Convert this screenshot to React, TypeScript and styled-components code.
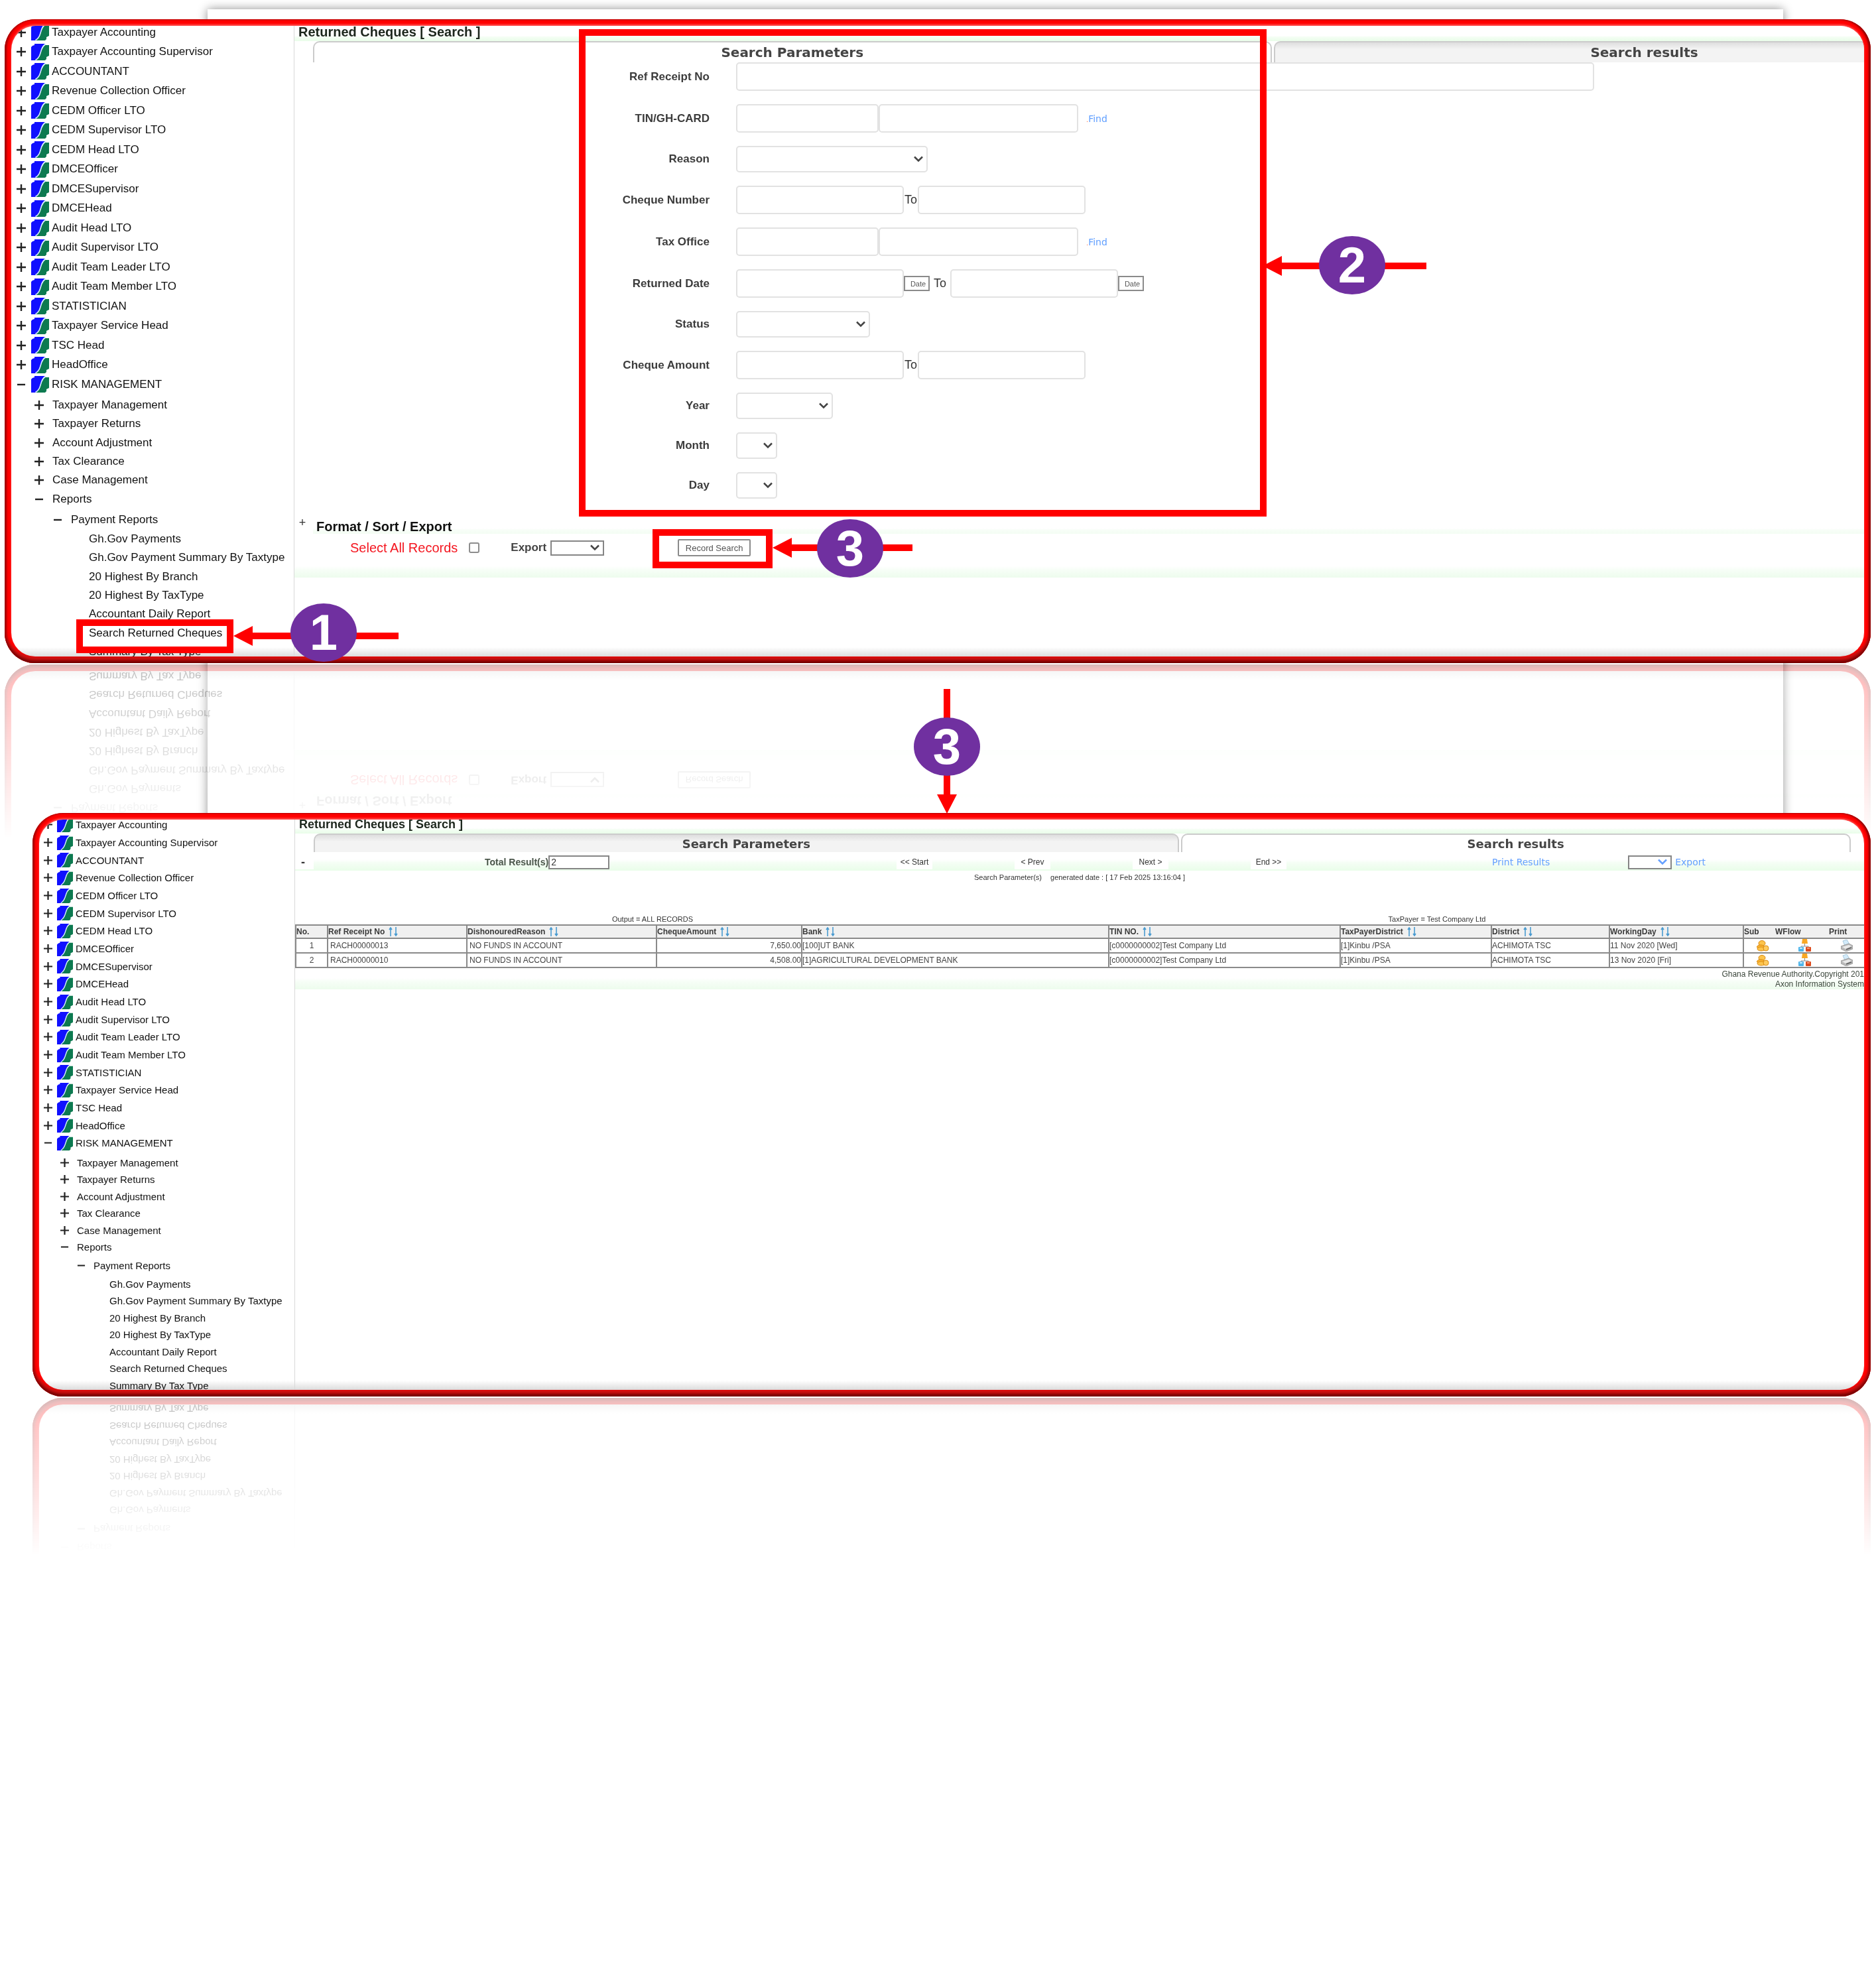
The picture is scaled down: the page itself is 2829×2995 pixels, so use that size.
import React from "react";
import styled, { createGlobalStyle, css } from "styled-components";

type Size = "large" | "medium";

const sans = `"Liberation Sans", Arial, Helvetica, sans-serif`;
const wide = `"DejaVu Sans", Verdana, sans-serif`;

const GlobalStyle = createGlobalStyle`
  *, *::before, *::after { box-sizing: border-box; }
  body { margin: 0; background: #fff; color: #222; font-family: ${sans}; }
  button, input, select { font-family: inherit; margin: 0; }
  ul { list-style: none; margin: 0; padding: 0; }
`;

/* ---------- page ---------- */

const Page = styled.div`
  position: relative;
  isolation: isolate;
  overflow: hidden;
  padding: 29px 8px 888px 7px;
  display: flex;
  flex-direction: column;
  gap: 226px;
`;

const Slide = styled.div`
  position: absolute;
  z-index: -1;
  left: 313px;
  right: 140px;
  top: 14px;
  height: 1600px;
  background: #fff;
  box-shadow: 0 0 14px rgba(0, 0, 0, 0.45);
`;

const Stage = styled.section<{ $indent?: boolean }>`
  position: relative;
  margin-left: ${(p) => (p.$indent ? 42 : 0)}px;
`;

const Frame = styled.div`
  padding: 10px;
  border-radius: 46px;
  background: #f00;
  box-shadow:
    inset 0 -4px 4px #700000,
    inset 0 -10px 3px #d01010,
    inset 3px 0 3px #b00000,
    inset -3px 0 3px #8c0000;
  -webkit-box-reflect: below 2px
    linear-gradient(to top, rgba(0, 0, 0, 0.28), transparent 27%);
`;

const Screen = styled.div`
  display: flex;
  overflow: hidden;
  border-radius: 36px;
  background: linear-gradient(to top, #dcdcdc, #fff 14px);
  box-shadow: 0 -2px 3px #ff5a5a;
`;

/* ---------- navigation tree ---------- */

const Nav = styled.nav<{ $size: Size }>`
  flex: none;
  width: ${(p) => (p.$size === "large" ? 427 : 386)}px;
  margin: ${(p) => (p.$size === "large" ? "-5px 0 -7px" : "-6px 0 -6px")};
  padding-left: ${(p) => (p.$size === "large" ? 5 : 4)}px;
  border-right: 1px solid #d9d9d9;
  font-size: ${(p) => (p.$size === "large" ? 17 : 15)}px;
  color: #111;
`;

const largeRoots = css`
  height: 29px;
  &:nth-child(even) { height: 30px; }
`;
const mediumRoots = css`
  height: 27px;
  &:nth-child(3n) { height: 26px; }
`;
const largeItems = css`
  height: 28px;
  &:nth-child(3n) { height: 29px; }
`;
const mediumItems = css`
  height: 26px;
  &:nth-child(even) { height: 25px; }
`;

const Row = styled.li<{ $size: Size; $root?: boolean }>`
  display: flex;
  align-items: center;
  white-space: nowrap;
  ${(p) =>
    p.$root
      ? p.$size === "large" ? largeRoots : mediumRoots
      : p.$size === "large" ? largeItems : mediumItems}
`;

const Branch = styled.ul<{ $pad: number; $top: number }>`
  padding-left: ${(p) => p.$pad}px;
  padding-top: ${(p) => p.$top}px;
`;

const Toggle = styled.button<{ $size: Size; $root?: boolean }>`
  display: flex;
  align-items: center;
  flex: none;
  width: ${(p) => (p.$size === "large" ? 25 : 23) + (p.$root ? 0 : 5)}px;
  padding: 0 0 0 3px;
  border: 0;
  background: none;
  color: #222;
`;

const RoleIcon = styled.svg<{ $size: Size }>`
  flex: none;
  width: ${(p) => (p.$size === "large" ? 27 : 24)}px;
  height: ${(p) => (p.$size === "large" ? 25 : 22)}px;
  margin-right: 4px;
`;

const NavLink = styled.a`
  color: inherit;
  text-decoration: none;
`;

const roles = [
  "Taxpayer Accounting", "Taxpayer Accounting Supervisor", "ACCOUNTANT",
  "Revenue Collection Officer", "CEDM Officer LTO", "CEDM Supervisor LTO",
  "CEDM Head LTO", "DMCEOfficer", "DMCESupervisor", "DMCEHead", "Audit Head LTO",
  "Audit Supervisor LTO", "Audit Team Leader LTO", "Audit Team Member LTO",
  "STATISTICIAN", "Taxpayer Service Head", "TSC Head", "HeadOffice", "RISK MANAGEMENT",
];
const sections = [
  "Taxpayer Management", "Taxpayer Returns", "Account Adjustment",
  "Tax Clearance", "Case Management", "Reports",
];
const reports = [
  "Gh.Gov Payments", "Gh.Gov Payment Summary By Taxtype", "20 Highest By Branch",
  "20 Highest By TaxType", "Accountant Daily Report", "Search Returned Cheques",
  "Summary By Tax Type",
];

const Expander = ({ open, size, name, root }: { open: boolean; size: Size; name: string; root?: boolean }) => {
  const d = size === "large" ? 14 : 13;
  return (
    <Toggle type="button" $size={size} $root={root} aria-label={name} aria-expanded={open}>
      <svg width={d} height={d} viewBox="0 0 14 14" stroke="currentColor" strokeWidth="2.4">
        <path d={open ? "M1 7h12" : "M0 7h14M7 0v14"} />
      </svg>
    </Toggle>
  );
};

const Tree = ({ size }: { size: Size }) => {
  const large = size === "large";
  return (
    <Nav $size={size} aria-label="Menu">
      <ul>
        {roles.map((r) => (
          <Row key={r} $size={size} $root>
            <Expander open={r === "RISK MANAGEMENT"} size={size} name={r} root />
            <RoleIcon $size={size} viewBox="0 0 27 25" preserveAspectRatio="none" aria-hidden="true">
              <path d="M0 5 2 3l3-1V0h16C12 6 17 19 8 25H0z" fill="#1010ff" />
              <path d="M27 2v16l-4 2v3l-2 2H7c10-5 5-18 14-23z" fill="#0d7a50" />
              <path d="M22 .5C12 6 17 19 6.500 24.500" fill="none" stroke="#d5ecff" strokeWidth="1.600" />
            </RoleIcon>
            <NavLink href="#">{r}</NavLink>
          </Row>
        ))}
      </ul>
      <Branch $pad={large ? 27 : 25} $top={3}>
        {sections.map((s) => (
          <Row key={s} $size={size}>
            <Expander open={s === "Reports"} size={size} name={s} />
            <NavLink href="#">{s}</NavLink>
          </Row>
        ))}
      </Branch>
      <Branch $pad={large ? 55 : 50} $top={large ? 3 : 2}>
        <Row $size={size}>
          <Expander open size={size} name="Payment Reports" />
          <NavLink href="#">Payment Reports</NavLink>
        </Row>
      </Branch>
      <Branch $pad={large ? 112 : 102} $top={large ? 1 : 2}>
        {reports.map((r) => (
          <Row key={r} $size={size}><NavLink href="#">{r}</NavLink></Row>
        ))}
      </Branch>
    </Nav>
  );
};

/* ---------- shared parts of the work area ---------- */

const Work = styled.main`
  flex: 1;
  min-width: 0;
  overflow: hidden;
`;

const Title = styled.h1<{ $size: Size }>`
  margin: 0;
  padding-left: 6px;
  height: ${(p) => (p.$size === "large" ? 23 : 21)}px;
  font-size: ${(p) => (p.$size === "large" ? 20 : 18)}px;
  line-height: ${(p) => (p.$size === "large" ? 18 : 15)}px;
  color: #1c261c;
  background: linear-gradient(to top, #e9fde9, #f4fef4 6px, #fff 8px);
`;

const Tabs = styled.div`
  display: flex;
  gap: 3px;
  padding-left: 28px;
`;

const Tab = styled.button<{ $size: Size; $share: string; $active?: boolean }>`
  flex: none;
  width: ${(p) => p.$share};
  height: ${(p) => (p.$size === "large" ? 32 : 28)}px;
  padding: 0;
  border: 2px solid #cbcbcb;
  border-bottom: 0;
  border-radius: 10px 10px 0 0;
  background: ${(p) => (p.$active ? "#fff" : "linear-gradient(#dedede, #f3f3f3 10px)")};
  color: #444;
  font: bold ${(p) => (p.$size === "large" ? 20 : 18)}px ${wide};
`;

const TextBox = styled.input<{ $w: number }>`
  width: ${(p) => p.$w}px;
  height: 43px;
  border: 2px solid #e2e2e2;
  border-radius: 5px;
  background: #fff;
  font-size: 17px;
`;

const Picker = styled.span<{ $w: number; $h: number; $plain?: boolean; $tint: string }>`
  display: inline-grid;
  align-items: center;
  width: ${(p) => p.$w}px;
  height: ${(p) => p.$h}px;
  color: ${(p) => p.$tint};
  & > * { grid-area: 1 / 1; }
  & > select {
    appearance: none;
    width: 100%;
    height: 100%;
    background: #fff;
    color: inherit;
    border: ${(p) => (p.$plain ? "2px solid #858585" : "2px solid #e2e2e2")};
    border-radius: ${(p) => (p.$plain ? 0 : 5)}px;
  }
  & > svg {
    justify-self: end;
    margin-right: 7px;
    pointer-events: none;
  }
`;

const Choice = ({ id, w, h = 40, plain, label, tint = "#444" }: { id: string; w: number; h?: number; plain?: boolean; label?: string; tint?: string }) => (
  <Picker $w={w} $h={h} $plain={plain} $tint={tint}>
    <select id={id} aria-label={label}><option /></select>
    <svg width="14" height="10" viewBox="0 0 14 10" fill="none" stroke="currentColor" strokeWidth="2.5">
      <path d="M1 1.500l6 6 6-6" />
    </svg>
  </Picker>
);

/* ---------- search form ---------- */

const Form = styled.form`
  display: grid;
  grid-template-columns: 626px 1fr;
  column-gap: 40px;
  row-gap: 20px;
  align-items: center;
`;

const FieldLabel = styled.label`
  text-align: right;
  font-size: 17px;
  font-weight: bold;
  color: #3c3c3c;
`;

const Field = styled.div`
  display: flex;
  align-items: center;
`;

const To = styled.span<{ $gap?: number }>`
  width: 21px;
  margin: 0 ${(p) => p.$gap ?? 0}px;
  font-size: 18px;
  text-align: center;
  color: #333;
`;

const Find = styled.a`
  margin-left: 12px;
  font: 14px ${wide};
  color: #62a0ff;
  text-decoration: none;
  &::before { content: "."; color: #ff7a5a; font-size: 10px; }
`;

const DateButton = styled.button`
  width: 39px;
  height: 23px;
  padding: 0 0 0 4px;
  border: 2px solid #8b8b8b;
  background: #fff;
  font-size: 11px;
  color: #555;
`;

const FormatBar = styled.div`
  display: flex;
  margin-top: 28px;
  height: 25px;
`;

const FormatToggle = styled.button`
  width: 28px;
  height: 16px;
  padding: 0 4px 0 0;
  border: 0;
  background: none;
  font-size: 18px;
  line-height: 16px;
  color: #333;
`;

const FormatTitle = styled.h2`
  flex: 1;
  margin: 0;
  padding-left: 5px;
  font-size: 20px;
  line-height: 28px;
  color: #111;
  background: linear-gradient(to top, #f3fdf3, #f8fef8 6px, #fff 8px);
`;

const Actions = styled.div`
  display: flex;
  align-items: center;
  height: 66px;
  padding: 0 0 24px 84px;
  background: linear-gradient(to top, #edfced, #f7fef7 12px, #fff 17px);
`;

const SelectAll = styled.label`
  font-size: 20px;
  color: #f4151f;
`;

const Tick = styled.input`
  appearance: none;
  width: 16px;
  height: 16px;
  margin: 0 47px 0 17px;
  border: 2px solid #8d8d8d;
  border-radius: 3px;
  background: #fff;
`;

const ExportLabel = styled.label`
  margin-right: 6px;
  font-size: 17px;
  font-weight: bold;
  color: #444;
`;

const RecordSearch = styled.button`
  width: 110px;
  height: 26px;
  margin-left: 111px;
  padding: 0;
  border: 2px solid #8b8b8b;
  border-radius: 2px;
  background: #fff;
  font-size: 13px;
  color: #555;
`;

/* ---------- results ---------- */

const Toolbar = styled.div`
  display: grid;
  grid-template-columns: 28px 879px 712px 1fr;
  align-items: center;
  height: 28px;
  padding-top: 2px;
  background: linear-gradient(to top, #e9fde9, #f5fef5 12px, #fff 17px);
`;

const Collapse = styled.button`
  height: 22px;
  padding: 0 4px 0 0;
  border: 0;
  background: #fff;
  font-size: 18px;
  font-weight: bold;
  line-height: 20px;
  color: #333;
`;

const Cluster = styled.div<{ $pad: number }>`
  display: flex;
  align-items: center;
  padding-left: ${(p) => p.$pad}px;
`;

const TotalLabel = styled.label`
  font-size: 14px;
  font-weight: bold;
  color: #4a564a;
`;

const TotalBox = styled.input`
  width: 92px;
  height: 21px;
  padding: 0 2px;
  border: 2px solid #858585;
  background: #fff;
  font-size: 14px;
  color: #333;
`;

const Pager = styled.div`
  display: grid;
  grid-template-columns: repeat(4, 178px);
`;

const PageButton = styled.button`
  width: 54px;
  height: 22px;
  padding: 0;
  border: 0;
  background: #fff;
  font-size: 12px;
  white-space: nowrap;
  color: #333;
`;

const ToolLink = styled.a<{ $after?: number }>`
  margin-right: ${(p) => p.$after ?? 0}px;
  font: 14px ${wide};
  color: #65a0ff;
  text-decoration: none;
`;

const Summary = styled.p`
  display: flex;
  justify-content: center;
  gap: 13px;
  margin: 0 0 45px;
  font-size: 11px;
  line-height: 20px;
  color: #333;
`;

const Criteria = styled.div`
  display: grid;
  grid-template-columns: 1078px 1fr;
  text-align: center;
  font-size: 11px;
  line-height: 16px;
  color: #333;
`;

const Table = styled.table`
  width: 100%;
  table-layout: fixed;
  border-collapse: collapse;
  border-top: 2px solid #8a8a8a;
  border-left: 2px solid #8a8a8a;
  font-size: 12px;
  white-space: nowrap;
  color: #444;
`;

const Column = styled.col<{ $w?: number }>`
  width: ${(p) => (p.$w ? `${p.$w}px` : "auto")};
`;

const HeadCell = styled.th<{ $bare?: boolean }>`
  height: 20px;
  padding: 0;
  text-align: left;
  border-bottom: 2px solid #8a8a8a;
  border-left: ${(p) => (p.$bare ? 0 : 2)}px solid #8a8a8a;
  background: #f0f0f0;
  color: #3a3a3a;
`;

const Cell = styled.td<{ $align?: string; $pad?: number; $bare?: boolean }>`
  height: 22px;
  padding: 0 0 0 ${(p) => p.$pad ?? 0}px;
  text-align: ${(p) => p.$align ?? "left"};
  border-bottom: 2px solid #8a8a8a;
  border-left: ${(p) => (p.$bare ? 0 : 2)}px solid #8a8a8a;
`;

const IconButton = styled.button`
  display: inline-flex;
  padding: 0;
  border: 0;
  background: none;
  vertical-align: middle;
`;

const SortButton = styled(IconButton)`
  margin-left: 5px;
`;

const Footer = styled.footer`
  padding-top: 2px;
  text-align: right;
  font-size: 12px;
  line-height: 15px;
  color: #3b463b;
  background: linear-gradient(to top, #edfced, #f7fef7 12px, #fff 17px);
`;

const columns: [string, number | undefined][] = [
  ["Ref Receipt No", 210], ["DishonouredReason", 286], ["ChequeAmount", 219],
  ["Bank", undefined], ["TIN NO.", 349], ["TaxPayerDistrict", 228],
  ["District", 178], ["WorkingDay", 202],
];

const records = [
  ["1", "RACH00000013", "7,650.00", "[100]UT BANK", "11 Nov 2020 [Wed]"],
  ["2", "RACH00000010", "4,508.00", "[1]AGRICULTURAL DEVELOPMENT BANK", "13 Nov 2020 [Fri]"],
];

const CoinsIcon = () => (
  <svg width="19" height="17" viewBox="0 0 19 17" stroke="#d98a12" strokeWidth="1">
    <ellipse cx="8" cy="4.500" rx="5" ry="4" fill="#fdc44c" />
    <ellipse cx="6" cy="10" rx="5.500" ry="3" fill="#fbb432" />
    <ellipse cx="7" cy="13" rx="6" ry="3" fill="#fdc44c" />
    <ellipse cx="14" cy="12" rx="4" ry="4" fill="#ffcb5e" />
  </svg>
);

const FlowIcon = () => (
  <svg width="19" height="20" viewBox="0 0 19 20">
    <path d="M6 0h7l1 7H5z" fill="#f9a825" />
    <path d="M9.500 7v4M4 13v-2h11v2" fill="none" stroke="#8a8a8a" />
    <rect x="0" y="12" width="8" height="7" rx="1" fill="#4fb5ea" />
    <rect x="2" y="13" width="4" height="2" fill="#c4e9fb" />
    <rect x="11" y="12" width="8" height="7" rx="1" fill="#dd4a1c" />
    <rect x="13" y="13" width="4" height="2" fill="#f59a78" />
  </svg>
);

const PrinterIcon = () => (
  <svg width="18" height="18" viewBox="0 0 18 18">
    <path d="M3 2l6-2 4 7-7 2z" fill="#d3ebfa" stroke="#8fb6cf" strokeWidth=".7" />
    <path d="M0 10l12-4 6 3v5l-10 4-8-4z" fill="#b9b9b9" stroke="#8b8b8b" strokeWidth=".7" />
    <path d="M2 11l10-3 4 2-9 4z" fill="#e9e9e9" />
    <path d="M8 15l8-3" stroke="#5d5d5d" strokeWidth="1.500" />
  </svg>
);

const SortArrows = () => (
  <svg width="16" height="14" viewBox="0 0 16 14" fill="none" stroke="#4a9bd0" strokeWidth="1.600">
    <path d="M4 14V1M2 4l2-3 2 3M12 0v13M10 10l2 3 2-3" />
  </svg>
);

/* ---------- annotations laid over the screens ---------- */

const Highlight = styled.div<{ $x: number; $y: number; $w: number; $h: number }>`
  position: absolute;
  left: ${(p) => p.$x}px;
  top: ${(p) => p.$y}px;
  width: ${(p) => p.$w}px;
  height: ${(p) => p.$h}px;
  border: 10px solid #f00;
  pointer-events: none;
`;

const Pointer = styled.div<{ $x: number; $y: number; $length: number; $down?: boolean }>`
  position: absolute;
  left: ${(p) => p.$x}px;
  top: ${(p) => p.$y}px;
  width: ${(p) => (p.$down ? 100 : p.$length)}px;
  height: ${(p) => (p.$down ? p.$length : 88)}px;
  display: grid;
  align-items: center;
  justify-items: center;
  & > * { grid-area: 1 / 1; }
`;

const Shaft = styled.svg`
  width: 100%;
  height: 100%;
  fill: #f00;
`;

const Badge = styled.span<{ $offset: number; $down?: boolean }>`
  display: flex;
  align-items: center;
  justify-content: center;
  align-self: start;
  justify-self: start;
  width: 100px;
  height: 88px;
  margin: ${(p) => (p.$down ? `${p.$offset}px 0 0` : `0 0 0 ${p.$offset}px`)};
  border-radius: 50%;
  background: #7030a0;
  color: #fff;
  font-size: 76px;
  font-weight: bold;
  line-height: 88px;
`;

const LeftArrow = ({ x, y, length, offset, axis, n }: { x: number; y: number; length: number; offset: number; axis: number; n: number }) => (
  <Pointer $x={x} $y={y} $length={length}>
    <Shaft viewBox={`0 0 ${length} 88`} aria-hidden="true">
      <path d={`M0 ${axis}l29-15v10H${length}v10H29v10z`} />
    </Shaft>
    <Badge $offset={offset}>{n}</Badge>
  </Pointer>
);

const Connector = () => (
  <Pointer $x={1371} $y={1010} $length={188} $down>
    <Shaft viewBox="0 0 100 188" aria-hidden="true">
      <path d="M45 0h10v159h10L50 188 35 159h10z" />
    </Shaft>
    <Badge $offset={43} $down>3</Badge>
  </Pointer>
);

/* ---------- screens ---------- */

const SearchScreen = () => (
  <Screen>
    <Tree size="large" />
    <Work>
      <Title $size="large">Returned Cheques [ Search ]</Title>
      <Tabs role="tablist">
        <Tab type="button" role="tab" aria-selected $size="large" $share="61.8%" $active>Search Parameters</Tab>
        <Tab type="button" role="tab" $size="large" $share="47.8%">Search results</Tab>
      </Tabs>
      <Form>
        <FieldLabel htmlFor="receipt">Ref Receipt No</FieldLabel>
        <Field><TextBox id="receipt" $w={1294} /></Field>

        <FieldLabel htmlFor="tin">TIN/GH-CARD</FieldLabel>
        <Field>
          <TextBox id="tin" $w={215} />
          <TextBox aria-label="Taxpayer name" $w={301} />
          <Find href="#">Find</Find>
        </Field>

        <FieldLabel htmlFor="reason">Reason</FieldLabel>
        <Field><Choice id="reason" w={289} /></Field>

        <FieldLabel htmlFor="number">Cheque Number</FieldLabel>
        <Field>
          <TextBox id="number" $w={253} />
          <To>To</To>
          <TextBox aria-label="Cheque number to" $w={253} />
        </Field>

        <FieldLabel htmlFor="office">Tax Office</FieldLabel>
        <Field>
          <TextBox id="office" $w={215} />
          <TextBox aria-label="Tax office name" $w={301} />
          <Find href="#">Find</Find>
        </Field>

        <FieldLabel htmlFor="returned">Returned Date</FieldLabel>
        <Field>
          <TextBox id="returned" $w={253} />
          <DateButton type="button">Date</DateButton>
          <To $gap={5}>To</To>
          <TextBox aria-label="Returned date to" $w={253} />
          <DateButton type="button">Date</DateButton>
        </Field>

        <FieldLabel htmlFor="status">Status</FieldLabel>
        <Field><Choice id="status" w={202} /></Field>

        <FieldLabel htmlFor="amount">Cheque Amount</FieldLabel>
        <Field>
          <TextBox id="amount" $w={253} />
          <To>To</To>
          <TextBox aria-label="Cheque amount to" $w={253} />
        </Field>

        <FieldLabel htmlFor="year">Year</FieldLabel>
        <Field><Choice id="year" w={146} /></Field>

        <FieldLabel htmlFor="month">Month</FieldLabel>
        <Field><Choice id="month" w={62} /></Field>

        <FieldLabel htmlFor="day">Day</FieldLabel>
        <Field><Choice id="day" w={62} /></Field>
      </Form>
      <FormatBar>
        <FormatToggle type="button">+</FormatToggle>
        <FormatTitle>Format / Sort / Export</FormatTitle>
      </FormatBar>
      <Actions>
        <SelectAll htmlFor="all">Select All Records</SelectAll>
        <Tick id="all" type="checkbox" />
        <ExportLabel htmlFor="export">Export</ExportLabel>
        <Choice id="export" w={81} h={23} plain />
        <RecordSearch type="button">Record Search</RecordSearch>
      </Actions>
    </Work>
  </Screen>
);

const ResultsScreen = () => (
  <Screen>
    <Tree size="medium" />
    <Work>
      <Title $size="medium" as="h2">Returned Cheques [ Search ]</Title>
      <Tabs role="tablist">
        <Tab type="button" role="tab" $size="medium" $share="55.8%">Search Parameters</Tab>
        <Tab type="button" role="tab" aria-selected $size="medium" $share="43.2%" $active>Search results</Tab>
      </Tabs>
      <Toolbar>
        <Collapse type="button">-</Collapse>
        <Cluster $pad={258}>
          <TotalLabel htmlFor="total">Total Result(s)</TotalLabel>
          <TotalBox id="total" defaultValue="2" />
        </Cluster>
        <Pager>
          <PageButton type="button">&lt;&lt; Start</PageButton>
          <PageButton type="button">&lt; Prev</PageButton>
          <PageButton type="button">Next &gt;</PageButton>
          <PageButton type="button">End &gt;&gt;</PageButton>
        </Pager>
        <Cluster $pad={186}>
          <ToolLink href="#" $after={118}>Print Results</ToolLink>
          <Choice id="format" label="Export format" w={66} h={21} plain tint="#65a0ff" />
          <Cluster $pad={5}><ToolLink href="#">Export</ToolLink></Cluster>
        </Cluster>
      </Toolbar>
      <Summary>
        <span>Search Parameter(s)</span>
        <span>generated date : [ 17 Feb 2025 13:16:04 ]</span>
      </Summary>
      <Criteria>
        <span>Output = ALL RECORDS</span>
        <span>TaxPayer = Test Company Ltd</span>
      </Criteria>
      <Table>
        <colgroup>
          <Column $w={48} />
          {columns.map(([name, w]) => <Column key={name} $w={w} />)}
          <Column $w={48} />
          <Column $w={81} />
          <Column $w={53} />
        </colgroup>
        <thead>
          <tr>
            <HeadCell>No.</HeadCell>
            {columns.map(([name]) => (
              <HeadCell key={name}>
                {name}
                <SortButton type="button" aria-label={`Sort by ${name}`}><SortArrows /></SortButton>
              </HeadCell>
            ))}
            <HeadCell>Sub</HeadCell>
            <HeadCell $bare>WFlow</HeadCell>
            <HeadCell $bare>Print</HeadCell>
          </tr>
        </thead>
        <tbody>
          {records.map(([no, receipt, amount, bank, day]) => (
            <tr key={no}>
              <Cell $align="center">{no}</Cell>
              <Cell $pad={3}>{receipt}</Cell>
              <Cell $pad={3}>NO FUNDS IN ACCOUNT</Cell>
              <Cell $align="right">{amount}</Cell>
              <Cell>{bank}</Cell>
              <Cell>[c0000000002]Test Company Ltd</Cell>
              <Cell>[1]Kinbu /PSA</Cell>
              <Cell>ACHIMOTA TSC</Cell>
              <Cell>{day}</Cell>
              <Cell $align="center" $pad={10}><IconButton type="button" aria-label="Sub"><CoinsIcon /></IconButton></Cell>
              <Cell $align="center" $pad={8} $bare><IconButton type="button" aria-label="Workflow"><FlowIcon /></IconButton></Cell>
              <Cell $align="center" $bare><IconButton type="button" aria-label="Print"><PrinterIcon /></IconButton></Cell>
            </tr>
          ))}
        </tbody>
      </Table>
      <Footer>
        <div>Ghana Revenue Authority.Copyright 201</div>
        <div>Axon Information System</div>
      </Footer>
    </Work>
  </Screen>
);

export default function App() {
  return (
    <>
      <GlobalStyle />
      <Page>
        <Slide />
        <Stage>
          <Frame><SearchScreen /></Frame>
          <Highlight $x={866} $y={15} $w={1037} $h={735} />
          <Highlight $x={108} $y={905} $w={237} $h={51} />
          <Highlight $x={977} $y={769} $w={181} $h={59} />
          <LeftArrow x={345} y={881} length={249} offset={86} axis={49} n={1} />
          <LeftArrow x={1897} y={327} length={247} offset={85} axis={45} n={2} />
          <LeftArrow x={1158} y={754} length={211} offset={67} axis={43} n={3} />
          <Connector />
        </Stage>
        <Stage $indent>
          <Frame><ResultsScreen /></Frame>
        </Stage>
      </Page>
    </>
  );
}
